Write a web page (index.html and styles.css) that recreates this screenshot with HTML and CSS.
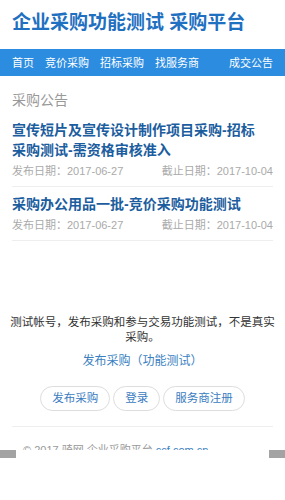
FILE: index.html
```html
<!DOCTYPE html>
<html lang="zh-CN">
<head>
<meta charset="utf-8">
<title>企业采购功能测试 采购平台</title>
<link rel="stylesheet" href="styles.css">
</head>
<body>
<header class="top">
  <h1 class="site-title">企业采购功能测试 采购平台</h1>
</header>
<nav class="nav">
  <a class="nav-link" href="#">首页</a>
  <a class="nav-link" href="#">竞价采购</a>
  <a class="nav-link" href="#">招标采购</a>
  <a class="nav-link" href="#">找服务商</a>
  <a class="nav-link nav-right" href="#">成交公告</a>
</nav>
<main class="content">
  <h2 class="section-title">采购公告</h2>
  <ul class="list">
    <li class="item">
      <a class="item-title" href="#">宣传短片及宣传设计制作项目采购-招标采购测试-需资格审核准入</a>
      <div class="meta"><span>发布日期：2017-06-27</span><span>截止日期：2017-10-04</span></div>
    </li>
    <li class="item">
      <a class="item-title" href="#">采购办公用品一批-竞价采购功能测试</a>
      <div class="meta"><span>发布日期：2017-06-27</span><span>截止日期：2017-10-04</span></div>
    </li>
  </ul>
</main>
<section class="notice">
  <p class="notice-text">测试帐号，发布采购和参与交易功能测试，不是真实采购。</p>
  <a class="notice-link" href="#">发布采购（功能测试）</a>
  <div class="buttons">
    <a class="btn" href="#">发布采购</a>
    <a class="btn" href="#">登录</a>
    <a class="btn" href="#">服务商注册</a>
  </div>
</section>
<footer class="footer">
  <p class="copy">© 2017 骑网 企业采购平台 <a class="copy-link" href="#">ccf.com.cn</a></p>
</footer>
<div class="bottom-bar">
  <span class="bar-end bar-left"></span>
  <span class="bar-end bar-right"></span>
</div>
</body>
</html>
```
FILE: styles.css
```css
html, body {
  margin: 0;
  padding: 0;
  background: #fff;
}
body {
  font-family: "Liberation Sans", "Noto Sans CJK SC", sans-serif;
  color: #333;
}
a {
  text-decoration: none;
}
.top {
  padding: 9px 12px 12px;
}
.site-title {
  margin: 0;
  font-size: 19px;
  line-height: 28px;
  font-weight: bold;
  color: #1f70c1;
}
.nav {
  display: flex;
  align-items: center;
  height: 27px;
  padding: 0 12px;
  background: #2b8ce0;
  gap: 11px;
}
.nav-link {
  color: #fff;
  font-size: 11px;
  line-height: 16px;
}
.nav-right {
  margin-left: auto;
}
.content {
  padding: 0 12px;
}
.section-title {
  margin: 14px 0 3px;
  font-size: 14px;
  line-height: 20px;
  font-weight: normal;
  color: #999;
}
.list {
  list-style: none;
  margin: 0;
  padding: 0;
}
.item {
  padding: 7px 0;
  border-bottom: 1px solid #eee;
}
.item-title {
  display: block;
  padding-right: 10px;
  font-size: 14px;
  line-height: 20px;
  font-weight: bold;
  color: #1b5d9e;
}
.meta {
  display: flex;
  justify-content: space-between;
  margin-top: 3px;
  font-size: 11px;
  line-height: 16px;
  color: #aaa;
}
.notice {
  margin-top: 74px;
  padding: 0 8px;
  text-align: center;
}
.notice-text {
  margin: 0;
  font-size: 11.5px;
  line-height: 15px;
  color: #333;
}
.notice-link {
  display: block;
  margin-top: 8px;
  font-size: 12px;
  line-height: 16px;
  color: #3a7fc1;
}
.buttons {
  display: flex;
  justify-content: center;
  gap: 3px;
  margin-top: 17px;
}
.btn {
  height: 23px;
  padding: 0 11px;
  border: 1px solid #ddd;
  border-radius: 13px;
  font-size: 11.5px;
  line-height: 23px;
  color: #3a7cbf;
}
.footer {
  margin: 15px 12px 0;
  border-top: 1px solid #eee;
}
.copy {
  margin: 0;
  padding: 15px 0 20px 11px;
  font-size: 11px;
  line-height: 16px;
  color: #999;
}
.copy-link {
  color: #3a7fc1;
}
.bottom-bar {
  position: fixed;
  left: 0;
  right: 0;
  bottom: 0;
  height: 50px;
  background: #fff;
}
.bar-end {
  position: absolute;
  top: 0;
  width: 16px;
  height: 8px;
  background: #a3a3a3;
}
.bar-left {
  left: 0;
}
.bar-right {
  right: 0;
}
```
